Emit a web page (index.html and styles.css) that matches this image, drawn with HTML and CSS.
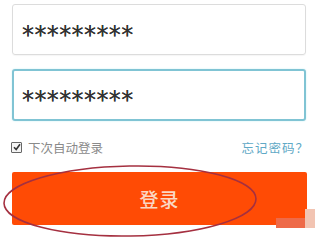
FILE: index.html
```html
<!DOCTYPE html>
<html lang="zh-CN">
<head>
    <meta charset="UTF-8">
    <meta name="viewport" content="width=device-width, initial-scale=1.0">
    <title>登录</title>
    <link rel="stylesheet" href="styles.css">
</head>
<body>
    <div class="login">
        <div class="field">*********</div>
        <div class="field active">*********</div>

        <div class="options">
            <label class="remember">
                <span class="check">
                    <svg width="8" height="8" viewBox="0 0 8 8"><path d="M1 4.2 L3.2 6.5 L7 1.2" fill="none" stroke="#333" stroke-width="1.6"/></svg>
                </span>
                下次自动登录
            </label>
            <a class="forgot">忘记密码？</a>
        </div>

        <div class="submit">登录</div>

        <svg class="circle" width="270" height="80" viewBox="0 0 270 80">
            <ellipse cx="129" cy="38" rx="126" ry="35" fill="none" stroke="#a53040" stroke-width="1.6" transform="rotate(-1 129 38)"/>
        </svg>
        <div class="mark-a"></div>
        <div class="mark-b"></div>
    </div>
</body>
</html>
```

FILE: styles.css
```css
body {
    margin: 0;
    background-color: #ffffff;
    font-family: "Noto Sans CJK SC", "DejaVu Sans", sans-serif;
}

.login {
    position: relative;
    width: 320px;
    height: 240px;
    padding: 4px 14px 0 12px;
    box-sizing: border-box;
    overflow: hidden;
}

.field {
    height: 51px;
    box-sizing: border-box;
    border: 1px solid #dcdcdc;
    border-radius: 3px;
    padding: 0 0 0 9px;
    font-family: "DejaVu Sans", sans-serif;
    font-size: 24px;
    line-height: 61px;
    letter-spacing: 0.4px;
    color: #333;
    text-shadow: 0 0 0.4px #333;
    overflow: hidden;
    box-shadow: 0 1px 1px rgba(0, 0, 0, 0.04);
}

.field.active {
    margin-top: 14px;
    height: 52px;
    border: 2px solid #80c4d4;
    padding-left: 8px;
    line-height: 58px;
    box-shadow: 0 0 2px #c8eef4;
}

.options {
    display: flex;
    justify-content: space-between;
    align-items: center;
    margin-top: 17px;
    margin-right: -3px;
    height: 18px;
    font-size: 12.5px;
}

.remember {
    display: flex;
    align-items: center;
    gap: 6px;
    color: #8a8a8a;
    margin-left: -1px;
}

.check {
    display: flex;
    align-items: center;
    justify-content: center;
    width: 9px;
    height: 9px;
    border: 1px solid #666;
    border-radius: 1px;
    background-color: #f4f4f4;
}

.forgot {
    color: #5fa9c6;
    letter-spacing: 1px;
}

.submit {
    margin-top: 16px;
    margin-right: -1px;
    height: 53px;
    background-color: #ff4b05;
    border-radius: 2px;
    color: #fbd8c4;
    font-size: 19px;
    font-weight: 500;
    text-align: center;
    line-height: 53px;
    letter-spacing: 1px;
}

.circle {
    position: absolute;
    left: 1px;
    top: 163px;
}

.mark-a {
    position: absolute;
    left: 276px;
    top: 218px;
    width: 29px;
    height: 10px;
    background-color: #ee6a48;
}

.mark-b {
    position: absolute;
    left: 305px;
    top: 209px;
    width: 10px;
    height: 19px;
    background-color: #f2c4b2;
}
```
